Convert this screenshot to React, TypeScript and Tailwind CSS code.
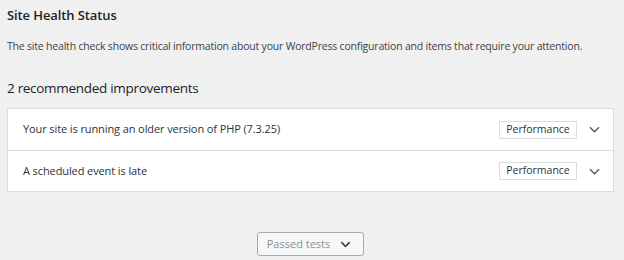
import { ChevronDown } from "lucide-react";

const issues = [
  { label: "Your site is running an older version of PHP (7.3.25)", badge: "Performance" },
  { label: "A scheduled event is late", badge: "Performance" },
];

function Chevron({ className }: { className?: string }) {
  return (
    <svg viewBox="0 0 12 7" className={className} fill="none" stroke="currentColor" strokeWidth="1.4">
      <path d="M1 1l5 5 5-5" />
    </svg>
  );
}

export default function App() {
  return (
    <div
      className="w-[624px] h-[260px] overflow-hidden bg-[#f0f0f1] text-[#1d2327] px-[7px] pt-[6px]"
      style={{ fontFamily: '"Open Sans", "Noto Sans", sans-serif' }}
    >
      {/* Header */}
      <h2 className="text-[13px] font-semibold leading-[18px] tracking-[-0.1px]">Site Health Status</h2>
      <p className="mt-[15px] text-[10.5px] leading-[14px] text-[#3c434a] tracking-[-0.2px] whitespace-nowrap">
        The site health check shows critical information about your WordPress configuration and items that require your attention.
      </p>

      {/* Issues */}
      <h3 className="mt-[26px] text-[13.5px] leading-[18px] tracking-[-0.3px]">2 recommended improvements</h3>
      <div className="mt-[11px] w-[607px] bg-white border border-[#dcdcde]">
        {issues.map((item, i) => (
          <div
            key={i}
            className={`flex items-center h-[41px] pl-[15px] pr-[13px] ${i > 0 ? "border-t border-[#dcdcde]" : ""}`}
          >
            <span className="flex-1 text-[11px] text-[#2c3338] tracking-[-0.1px]">{item.label}</span>
            <span className="w-[78px] h-[18px] flex items-center justify-center border border-[#dcdcde] text-[10.5px] text-[#2c3338]">
              {item.badge}
            </span>
            <Chevron className="ml-[12px] w-[11px] h-[7px] text-[#50575e]" />
          </div>
        ))}
      </div>

      {/* Passed tests */}
      <div className="flex justify-center mt-[40px] pr-[4px]">
        <button className="w-[107px] h-[24px] flex items-center justify-center gap-[8px] bg-[#f6f7f7] border border-[#a7aaad] rounded-[3px] text-[11px] text-[#8c8f94]">
          Passed tests
          <ChevronDown className="w-[15px] h-[15px] text-[#3c434a]" strokeWidth={2.5} />
        </button>
      </div>
    </div>
  );
}
